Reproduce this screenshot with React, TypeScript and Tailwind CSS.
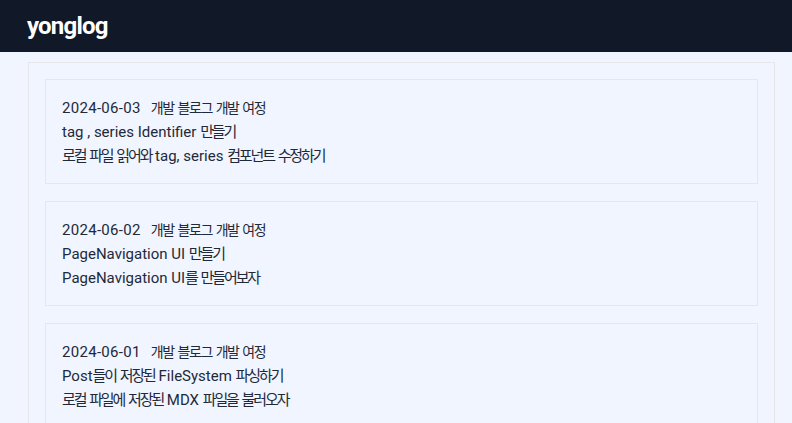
const posts = [
  {
    date: '2024-06-03',
    series: '개발 블로그 개발 여정',
    title: 'tag , series Identifier 만들기',
    description: '로컬 파일 읽어와 tag, series 컴포넌트 수정하기',
  },
  {
    date: '2024-06-02',
    series: '개발 블로그 개발 여정',
    title: 'PageNavigation UI 만들기',
    description: 'PageNavigation UI를 만들어보자',
  },
  {
    date: '2024-06-01',
    series: '개발 블로그 개발 여정',
    title: 'Post들이 저장된 FileSystem 파싱하기',
    description: '로컬 파일에 저장된 MDX 파일을 불러오자',
  },
];

// hangul words are set a bit tighter, like the narrow korean face in the design
function Text({ children, small }: { children: string; small?: boolean }) {
  const parts = children.split(/([\uac00-\ud7a3]+)/);
  return (
    <>
      {parts.map((part, i) =>
        /[\uac00-\ud7a3]/.test(part) ? (
          <span key={i} className={small ? 'text-[14px] tracking-[-1.4px]' : 'tracking-[-2.1px]'}>
            {part}
          </span>
        ) : (
          <span key={i}>{part}</span>
        )
      )}
    </>
  );
}

export default function App() {
  return (
    <div className="min-h-screen bg-[#f0f5ff] font-['Roboto','Noto_Sans_CJK_KR',sans-serif] text-[#1f2937]">
      <header className="h-[52px] bg-[#111827] flex items-center px-[27px]">
        <h1 className="text-white text-[24px] font-bold tracking-[-0.8px]">yonglog</h1>
      </header>

      <main className="mt-[10px] ml-[28px] mr-[17px] border border-gray-200 p-4 flex flex-col gap-[17px]">
        {posts.map((post) => (
          <div key={post.date} className="border border-gray-200 px-4 pt-4 pb-[15px] text-[15px] leading-[24px]">
            <div className="flex gap-[10px]">
              <span className="tracking-[0.3px]">{post.date}</span>
              <span>
                <Text small>{post.series}</Text>
              </span>
            </div>
            <div>
              <Text>{post.title}</Text>
            </div>
            <div>
              <Text>{post.description}</Text>
            </div>
          </div>
        ))}
      </main>
    </div>
  );
}
